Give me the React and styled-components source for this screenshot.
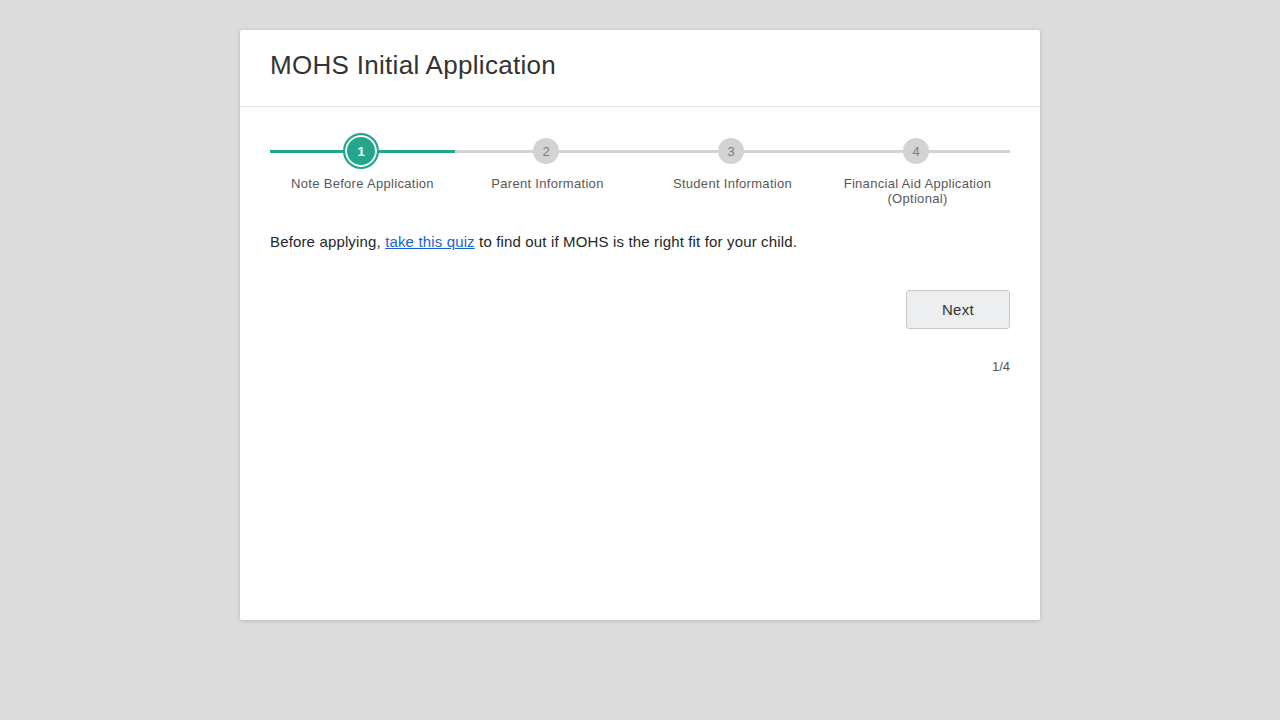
import React from "react";
import styled, { createGlobalStyle } from "styled-components";

const GlobalStyle = createGlobalStyle`
  html, body {
    margin: 0;
    padding: 0;
    background: #dcdcdc;
    font-family: "Liberation Sans", Arial, sans-serif;
  }
`;

const Page = styled.div`
  display: flex;
  justify-content: center;
  padding-top: 30px;
  min-height: 720px;
  box-sizing: border-box;
`;

const Card = styled.div`
  width: 800px;
  height: 590px;
  background: #fff;
  border-radius: 2px;
  box-shadow: 0 1px 4px rgba(0, 0, 0, 0.18);
  display: flex;
  flex-direction: column;
`;

const Header = styled.div`
  padding: 0 30px;
  height: 76px;
  border-bottom: 1px solid #e6e6e6;
  display: flex;
  align-items: center;
`;

const Title = styled.h1`
  margin: 0 0 6px;
  font-family: "Liberation Sans", Arial, sans-serif;
  font-size: 26px;
  font-weight: 400;
  color: #333;
  letter-spacing: 0.3px;
`;

const Body = styled.div`
  padding: 26px 30px 0;
  display: flex;
  flex-direction: column;
`;

const Stepper = styled.div`
  display: grid;
  grid-template-columns: repeat(4, 1fr);
`;

const Step = styled.div`
  display: flex;
  flex-direction: column;
  align-items: center;
`;

const Track = styled.div`
  position: relative;
  width: 100%;
  height: 36px;
  display: flex;
  align-items: center;
  justify-content: center;

  &::before {
    content: "";
    position: absolute;
    left: 0;
    right: 0;
    top: 17px;
    height: 3px;
    background: ${(p) => (p.$active ? "#23a78b" : "#d3d3d3")};
  }
`;

const Circle = styled.div`
  position: relative;
  z-index: 1;
  box-sizing: border-box;
  margin-right: 3px;
  width: ${(p) => (p.$active ? "36px" : "26px")};
  height: ${(p) => (p.$active ? "36px" : "26px")};
  border-radius: 50%;
  display: flex;
  align-items: center;
  justify-content: center;
  font-family: "Liberation Sans", Arial, sans-serif;
  font-size: 13px;
  background: ${(p) => (p.$active ? "#23a78b" : "#d3d3d3")};
  color: ${(p) => (p.$active ? "#fff" : "#7d7d7d")};
  font-weight: ${(p) => (p.$active ? 700 : 400)};
  border: ${(p) => (p.$active ? "2px solid #23a78b" : "none")};
  box-shadow: ${(p) => (p.$active ? "inset 0 0 0 2px #fff" : "none")};
`;

const StepLabel = styled.div`
  margin-top: 7px;
  font-family: "Liberation Sans", Arial, sans-serif;
  font-size: 13px;
  line-height: 15px;
  color: #585858;
  text-align: center;
  letter-spacing: 0.3px;
`;

const Note = styled.p`
  margin: 27px 0 0;
  font-size: 15px;
  line-height: 18px;
  color: #262626;
  letter-spacing: 0.15px;
`;

const QuizLink = styled.a`
  color: #1a5fd6;
  text-decoration: underline;
`;

const Actions = styled.div`
  display: flex;
  justify-content: flex-end;
  margin-top: 39px;
`;

const NextButton = styled.button`
  width: 104px;
  height: 39px;
  background: #eceef0;
  border: 1px solid #c9c9c9;
  border-radius: 3px;
  font-family: "Liberation Sans", Arial, sans-serif;
  font-size: 15px;
  letter-spacing: 0.3px;
  color: #333;
  cursor: pointer;
  padding-top: 1px;
`;

const Counter = styled.div`
  margin-top: 30px;
  text-align: right;
  font-family: "Liberation Sans", Arial, sans-serif;
  font-size: 13px;
  color: #555;
`;

const steps = [
  ["Note Before Application"],
  ["Parent Information"],
  ["Student Information"],
  ["Financial Aid Application", "(Optional)"],
];

export default function App() {
  const current = 0;
  return (
    <>
      <GlobalStyle />
      <Page>
        <Card>
          <Header>
            <Title>MOHS Initial Application</Title>
          </Header>
          <Body>
            <Stepper>
              {steps.map((lines, i) => (
                <Step key={i}>
                  <Track $active={i === current}>
                    <Circle $active={i === current}>{i + 1}</Circle>
                  </Track>
                  <StepLabel>
                    {lines.map((l, j) => (
                      <div key={j}>{l}</div>
                    ))}
                  </StepLabel>
                </Step>
              ))}
            </Stepper>
            <Note>
              Before applying, <QuizLink href="#">take this quiz</QuizLink> to
              find out if MOHS is the right fit for your child.
            </Note>
            <Actions>
              <NextButton>Next</NextButton>
            </Actions>
            <Counter>1/4</Counter>
          </Body>
        </Card>
      </Page>
    </>
  );
}
